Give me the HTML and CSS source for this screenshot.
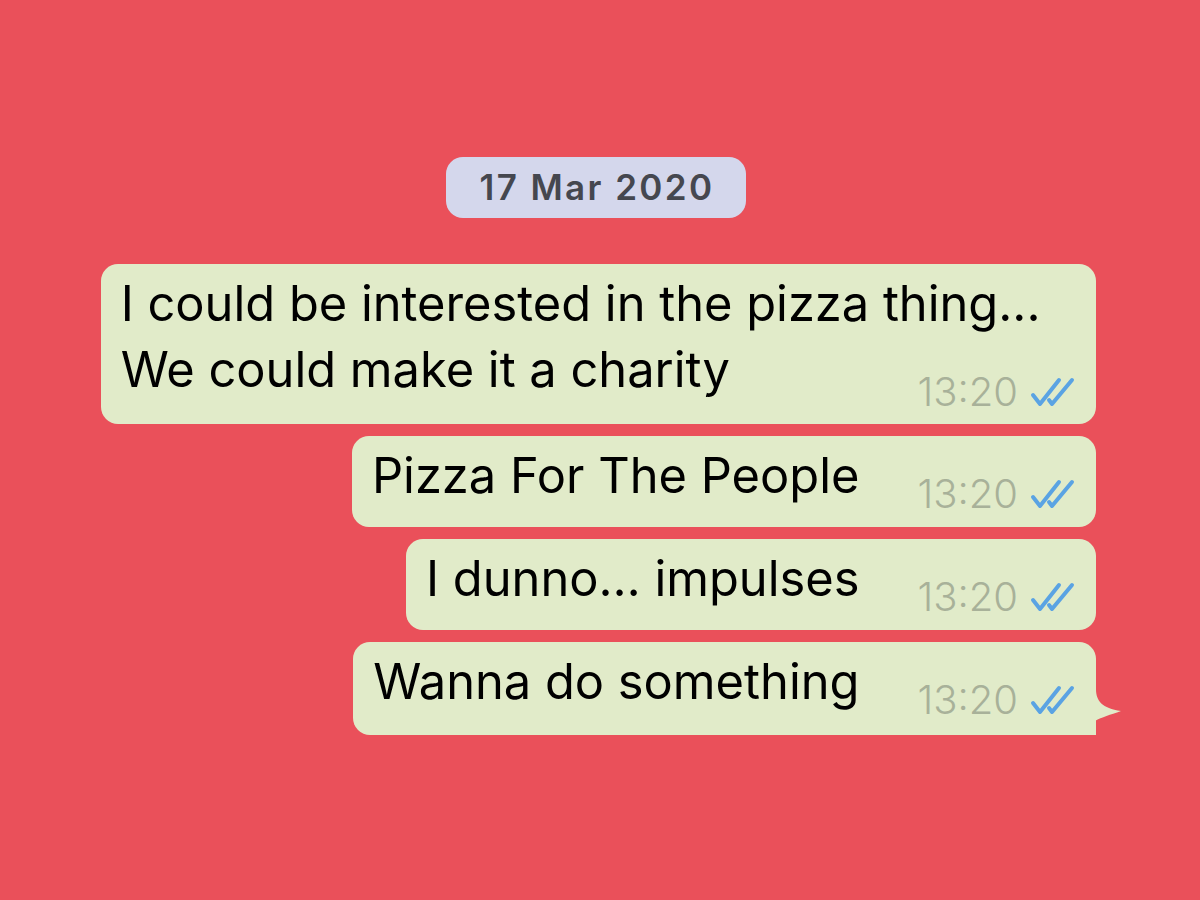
FILE: index.html
```html
<!DOCTYPE html>
<html lang="en">
<head>
<meta charset="utf-8">
<title>Chat</title>
<link rel="stylesheet" href="styles.css">
</head>
<body>
<main class="chat">
  <div class="date">17 Mar 2020</div>

  <div class="bubble bubble-multi">
    <p class="text">I could be interested in the pizza thing...<br>We could make it a charity</p>
    <div class="meta"><span class="time">13:20</span>
      <svg class="ticks" viewBox="0 0 45 30" width="45" height="30"><path d="M3 18 L10 27 L29 3 M19 23 L22 27 L42 3"/></svg>
    </div>
  </div>

  <div class="bubble">
    <p class="text">Pizza For The People</p>
    <div class="meta"><span class="time">13:20</span>
      <svg class="ticks" viewBox="0 0 45 30" width="45" height="30"><path d="M3 18 L10 27 L29 3 M19 23 L22 27 L42 3"/></svg>
    </div>
  </div>

  <div class="bubble">
    <p class="text">I dunno… impulses</p>
    <div class="meta"><span class="time">13:20</span>
      <svg class="ticks" viewBox="0 0 45 30" width="45" height="30"><path d="M3 18 L10 27 L29 3 M19 23 L22 27 L42 3"/></svg>
    </div>
  </div>

  <div class="bubble bubble-tail">
    <p class="text">Wanna do something</p>
    <div class="meta"><span class="time">13:20</span>
      <svg class="ticks" viewBox="0 0 45 30" width="45" height="30"><path d="M3 18 L10 27 L29 3 M19 23 L22 27 L42 3"/></svg>
    </div>
    <svg class="tail" viewBox="0 0 45 46" width="45" height="46"><path d="M0 0 L20 0 C20 12 26 19 45 22 C34 26 26 28 19 32 C16 42 10 46 0 46 Z"/></svg>
  </div>
</main>
</body>
</html>
```

FILE: styles.css
```css
html, body {
  margin: 0;
  padding: 0;
}

body {
  background: #ea505a;
  width: 1200px;
  height: 900px;
  overflow: hidden;
  font-family: Inter, "Liberation Sans", sans-serif;
}

.chat {
  display: flex;
  flex-direction: column;
  align-items: flex-end;
  gap: 12px;
  padding: 157px 104px 0 96px;
}

.date {
  align-self: center;
  background: #d4d7ec;
  color: #45474f;
  font-size: 35px;
  font-weight: 600;
  letter-spacing: 2.4px;
  height: 61px;
  line-height: 61px;
  padding: 0 31px 0 33px;
  border-radius: 17px;
  margin-bottom: 34px;
}

.bubble {
  position: relative;
  display: flex;
  align-items: flex-end;
  background: #e1ebc9;
  border-radius: 17px;
  padding: 7px 21px 18px 20px;
}

.bubble-multi {
  padding-bottom: 21px;
}

.text {
  margin: 0;
  color: #000;
  font-size: 48.8px;
  line-height: 66px;
  white-space: nowrap;
}

.meta {
  display: flex;
  align-items: center;
  gap: 12px;
  margin-left: 58px;
  margin-bottom: -5px;
}

.bubble-multi .meta {
  margin-left: -123px;
  margin-bottom: -9px;
}

.time {
  color: #a8b199;
  font-size: 40px;
  font-weight: 300;
  line-height: 40px;
}

.ticks {
  display: block;
  fill: none;
  stroke: #5aa3e3;
  stroke-width: 4;
  stroke-linecap: round;
  stroke-linejoin: round;
}

.bubble-tail {
  padding-bottom: 20px;
  border-bottom-right-radius: 0;
}

.tail {
  position: absolute;
  right: -25px;
  bottom: 0;
  fill: #e1ebc9;
}
```
